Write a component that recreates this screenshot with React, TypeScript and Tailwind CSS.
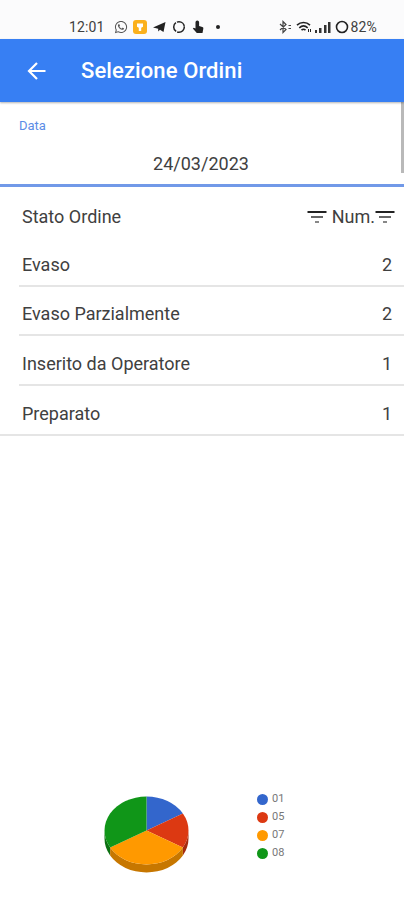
import clsx from "clsx";
import { FaWhatsapp } from "react-icons/fa";

type OrderStatus = {
  label: string;
  count: number;
};

type Slice = {
  code: string;
  value: number;
  color: string;
};

const statuses: OrderStatus[] = [
  { label: "Evaso", count: 2 },
  { label: "Evaso Parzialmente", count: 2 },
  { label: "Inserito da Operatore", count: 1 },
  { label: "Preparato", count: 1 },
];

const slices: Slice[] = [
  { code: "01", value: 1, color: "#3366cc" },
  { code: "05", value: 1, color: "#dc3912" },
  { code: "07", value: 2, color: "#ff9900" },
  { code: "08", value: 2, color: "#109618" },
];

function StatusBar() {
  return (
    <div className="flex h-[39px] items-end bg-[#fbfbfc] pr-[27px] pb-[4px] pl-[69px] text-[#404040]">
      <div className="flex h-4 flex-1 items-center">
        <span className="w-[45px] text-[14px] leading-4 tracking-[0.1px]">12:01</span>
        <FaWhatsapp className="size-[14px] text-[#555]" />
        <svg viewBox="0 0 14 14" className="ml-[5px] size-[14px]">
          <rect width="14" height="14" rx="3" fill="#fbb11c" />
          <path d="M4 3.500h6v3.200L8.200 7.800V11H5.800V7.800L4 6.700z" fill="#fff" />
        </svg>
        <svg viewBox="0 0 13 12" className="ml-[6px] h-3 w-[13px]">
          <path d="M0 6.500 12.500 1 10.500 11 7 8.700 5.200 10.500V7.700z" fill="#222" />
        </svg>
        <svg viewBox="0 0 14 14" className="ml-[6px] size-[14px]" fill="none">
          <circle cx="7" cy="7" r="5.300" stroke="#222" strokeWidth="1.500" strokeDasharray="10 1.100" />
        </svg>
        <svg viewBox="0 0 12 14" className="ml-[6px] h-[14px] w-3" fill="#222">
          <path d="M3.500 2.200a1.800 1.800 0 0 1 3.600 0V6l3.200 1c.8.300 1.200.8 1 1.700L10.500 13H4.800L.8 8.600l1-.8L3.500 8.500z" />
        </svg>
        <span className="ml-[12px] size-[4px] rounded-full bg-[#222]" />
      </div>
      <div className="flex h-4 items-center">
        <svg viewBox="0 0 13 14" className="h-[14px] w-[13px]" fill="none" stroke="#444" strokeWidth="1.2">
          <path d="M1 4 7 9.500 4 12.500V1.500L7 4.500 1 10M9.500 5.500h2.500M9.500 8.500h2.500" />
        </svg>
        <svg viewBox="0 0 16 14" className="ml-[4px] h-[14px] w-4" fill="none" stroke="#222" strokeWidth="1.600">
          <path d="M1 5.200C4.800 1.600 10.200 1.600 14 5.200M3.300 7.800C5.900 5.400 9.100 5.400 11.700 7.800M5.500 10.200C6.800 9 8.200 9 9.500 10.200" />
          <path d="M12.500 9v3M14.500 9v3" strokeWidth="1" />
        </svg>
        <svg viewBox="0 0 16 13" className="ml-[3px] h-[13px] w-4" fill="#333">
          <rect x="0" y="9" width="2" height="3" />
          <rect x="4" y="7" width="2.500" height="5" />
          <rect x="9" y="4" width="2.500" height="8" />
          <rect x="13" y="1" width="2.500" height="11" />
        </svg>
        <svg viewBox="0 0 14 14" className="ml-[4px] size-[14px]" fill="none">
          <circle cx="7" cy="7" r="5.500" stroke="#222" strokeWidth="1.600" />
        </svg>
        <span className="ml-px text-[14px] leading-4 tracking-[0.2px]">82%</span>
      </div>
    </div>
  );
}

function AppBar({ title }: { title: string }) {
  return (
    <header className="relative z-10 flex h-[63px] items-center bg-[#377ff3] pl-[27px] text-white shadow-[0_1px_2px_rgba(0,0,0,0.3)]">
      <button type="button" aria-label="Indietro">
        <svg viewBox="0 0 20 20" className="size-5" fill="none" stroke="currentColor" strokeWidth="2.200">
          <path d="M18.500 10H2.500M10 2 2 10l8 8" />
        </svg>
      </button>
      <h1 className="ml-[34px] text-[22px] leading-7 font-medium tracking-[0.1px]">{title}</h1>
    </header>
  );
}

function FilterIcon() {
  return (
    <svg viewBox="0 0 20 14" className="h-[14px] w-5">
      <path d="M0.500 2h19" stroke="#222" strokeWidth="2" />
      <path d="M4 7h12" stroke="#666" strokeWidth="2" />
      <path d="M8 12h4" stroke="#888" strokeWidth="2" />
    </svg>
  );
}

/** Point on the rim of the pie, with the angle measured clockwise from the top. */
function rimPoint(angle: number) {
  return `${42.500 + 42 * Math.sin(angle)} ${34.500 - 34 * Math.cos(angle)}`;
}

function PieChart({ data }: { data: Slice[] }) {
  const total = data.reduce((sum, s) => sum + s.value, 0);
  let start = 0;
  const wedges = data.map((s) => {
    const end = start + (s.value / total) * Math.PI * 2;
    const d = `M42.500 34.500 L${rimPoint(start)} A42 34 0 0 1 ${rimPoint(end)} Z`;
    start = end;
    return { code: s.code, color: s.color, d };
  });

  return (
    <svg viewBox="0 0 85 77" className="h-[77px] w-[85px]">
      {/* side wall, darker than the top face */}
      <path d="M78.870 51.500A42 34 0 0 0 84.500 34.500v8A42 34 0 0 1 78.870 59.500z" fill="#a52b0e" />
      <path d="M6.130 51.500A42 34 0 0 1 .5 34.500v8A42 34 0 0 0 6.130 59.500z" fill="#0c7112" />
      <path d="M6.130 51.500A42 34 0 0 0 78.870 51.500v8A42 34 0 0 1 6.130 59.500z" fill="#c77700" />
      {wedges.map((w) => (
        <path key={w.code} d={w.d} fill={w.color} />
      ))}
    </svg>
  );
}

export default function App() {
  return (
    <div className="flex h-[900px] w-[404px] flex-col overflow-hidden bg-white font-[Roboto,sans-serif] text-[#404040]">
      <StatusBar />
      <AppBar title="Selezione Ordini" />

      <section className="relative h-[85px] border-b-[3px] border-[#7199e8] pt-4">
        <label className="block pl-[19px] text-[13px] leading-4 text-[#5c8ce6]">Data</label>
        <p className="mt-[18px] pr-[2px] text-center text-[18px] leading-6">24/03/2023</p>
        <span className="absolute top-0 right-0 h-[71px] w-[3px] bg-[#b9b9b9]" />
      </section>

      <div className="flex h-[50px] items-center pt-[10px] pr-[9px] pl-[22px] text-[18px] leading-6">
        <span className="flex-1">Stato Ordine</span>
        <FilterIcon />
        <span className="ml-[5px]">Num.</span>
        <FilterIcon />
      </div>

      <ul>
        {statuses.map((status, i) => (
          <li
            key={status.label}
            className={clsx(
              "flex items-end border-b-2 border-[#e5e5e5] pr-[12px] pb-[8px] text-[18px] leading-6",
              i === statuses.length - 1 ? "h-[50px] pl-[22px]" : "ml-[19px] h-[49.500px] pl-[3px]",
            )}
          >
            <span className="flex-1">{status.label}</span>
            <span>{status.count}</span>
          </li>
        ))}
      </ul>

      <div className="mt-auto flex items-start pb-[27px] pl-[104px]">
        <div className="pt-[6px]">
          <PieChart data={slices} />
        </div>
        <ul className="ml-[68px]">
          {slices.map((s) => (
            <li key={s.code} className="flex h-[18px] items-center gap-[4px] text-[11px] leading-[18px] text-[#777]">
              <svg viewBox="0 0 11 11" className="size-[11px]">
                <circle cx="5.500" cy="5.500" r="5.500" fill={s.color} />
              </svg>
              {s.code}
            </li>
          ))}
        </ul>
      </div>
    </div>
  );
}
